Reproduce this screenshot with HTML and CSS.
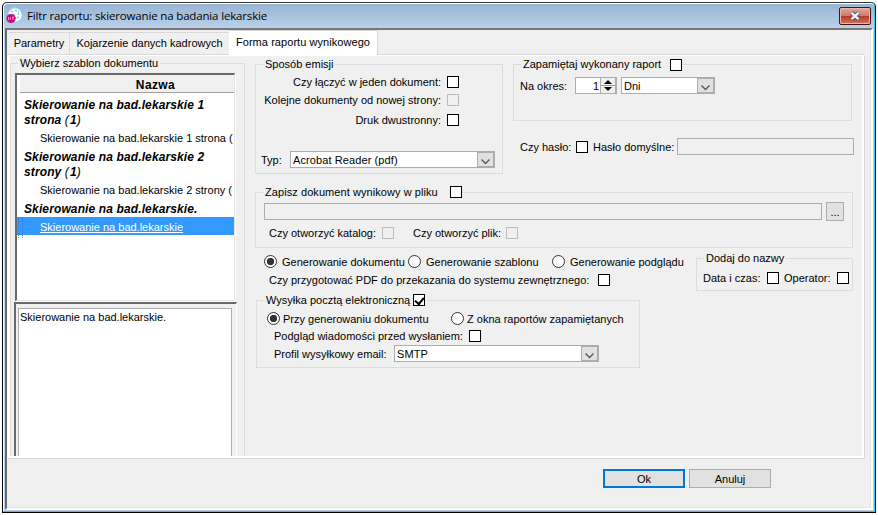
FILE: index.html
```html
<!DOCTYPE html>
<html lang="pl">
  <head>
    <meta charset="UTF-8">
    <meta name="viewport" content="width=device-width, initial-scale=1">
    <title>Filtr raportu</title>
    <link rel="stylesheet" href="styles.css">
  </head>
  <body>
    <div class="window">
      <div class="titlebar">
        <svg class="app-icon" width="17" height="17" viewBox="0 0 17 17">
          <circle cx="9" cy="8" r="7.2" fill="#f2fdff" stroke="#7fd6ea" stroke-width="1"/>
          <path d="M5 4l2 1M9 3l2 1M12 6l1 2M7 7l2 1M11 11l2-1M9 10l1 2M13 4l-1 1" stroke="#5cc4de" stroke-width="1"/>
          <circle cx="5" cy="11.5" r="4.6" fill="#d4087c"/>
          <path d="M2.5 10v3M4.3 10v3M6 10.2h2M7 10v3" stroke="#f5b5d9" stroke-width=".8"/>
        </svg>
        <span class="title">Filtr raportu: skierowanie na badania lekarskie</span>
        <button class="close">
          <svg width="12" height="10" viewBox="0 0 12 10">
            <path d="M2.5 1.8l7 6.4M9.5 1.8l-7 6.4" stroke="#4d5560" stroke-width="4.4"/>
            <path d="M2.5 1.8l7 6.4M9.5 1.8l-7 6.4" stroke="#f4f4f4" stroke-width="2.4"/>
          </svg>
        </button>
      </div>

      <div class="content">
        <div class="tabs">
          <div class="tab tab-first">Parametry</div>
          <div class="tab tab-second">Kojarzenie danych kadrowych</div>
          <div class="tab active">Forma raportu wynikowego</div>
          <div class="tab-rest"></div>
        </div>

        <div class="pane">
          <fieldset class="templates">
            <legend>Wybierz szablon dokumentu</legend>
            <div class="tree">
              <div class="tree-head">Nazwa</div>
              <div class="node">Skierowanie na bad.lekarskie 1<br>strona <i>(</i>1<i>)</i></div>
              <div class="leaf">Skierowanie na bad.lekarskie 1 strona (</div>
              <div class="node">Skierowanie na bad.lekarskie 2<br>strony <i>(</i>1<i>)</i></div>
              <div class="leaf">Skierowanie na bad.lekarskie 2 strony (</div>
              <div class="node single">Skierowanie na bad.lekarskie.</div>
              <div class="leaf selected"><span>Skierowanie na bad.lekarskie</span></div>
            </div>
            <div class="desc">
              <div class="desc-text">Skierowanie na bad.lekarskie.</div>
            </div>
          </fieldset>

          <div class="settings">
            <div class="top">
              <fieldset class="emission">
                <legend>Sposób emisji</legend>
                <label class="row right">Czy łączyć w jeden dokument:<input type="checkbox"></label>
                <label class="row right second">Kolejne dokumenty od nowej strony:<input type="checkbox" disabled></label>
                <label class="row right third">Druk dwustronny:<input type="checkbox"></label>
                <div class="row type">
                  <span class="type-label">Typ:</span>
                  <div class="select wide">Acrobat Reader (pdf)
                    <span class="arrow"><svg width="11" height="7" viewBox="0 0 11 7"><path d="M1.5 1.5l4 4 4-4" fill="none" stroke="#555" stroke-width="1.3"/></svg></span>
                  </div>
                </div>
              </fieldset>

              <div class="top-right">
                <fieldset class="remember">
                  <legend>Zapamiętaj wykonany raport<input type="checkbox"></legend>
                  <div class="row period">
                    <span class="period-label">Na okres:</span>
                    <div class="spinner">1
                      <span class="steps"><svg width="14" height="15" viewBox="0 0 14 15"><path d="M0 7.5h14" stroke="#999"/><path d="M3 6l4-4 4 4zM3 9l4 4 4-4z" fill="#000"/></svg></span>
                    </div>
                    <div class="select unit">Dni
                      <span class="arrow"><svg width="11" height="7" viewBox="0 0 11 7"><path d="M1.5 1.5l4 4 4-4" fill="none" stroke="#555" stroke-width="1.3"/></svg></span>
                    </div>
                  </div>
                </fieldset>
                <div class="row password">
                  <span class="pass-label">Czy hasło:</span><input type="checkbox">
                  <span class="default-label">Hasło domyślne:</span><div class="field pass"></div>
                </div>
              </div>
            </div>

            <fieldset class="file">
              <legend>Zapisz dokument wynikowy w pliku<input type="checkbox"></legend>
              <div class="row path">
                <div class="field"></div>
                <button class="browse">...</button>
              </div>
              <div class="row open">
                <span class="dir-label">Czy otworzyć katalog:</span><input type="checkbox" disabled>
                <span class="file-label">Czy otworzyć plik:</span><input type="checkbox" disabled>
              </div>
            </fieldset>

            <div class="middle">
              <div class="generate">
                <div class="row modes">
                  <label class="row"><input type="radio" name="mode" checked>Generowanie dokumentu</label>
                  <label class="row"><input type="radio" name="mode">Generowanie szablonu</label>
                  <label class="row"><input type="radio" name="mode">Generowanie podglądu</label>
                </div>
                <div class="row pdf">
                  <span class="pdf-label">Czy przygotować PDF do przekazania do systemu zewnętrznego:</span><input type="checkbox">
                </div>
              </div>
              <fieldset class="add-name">
                <legend>Dodaj do nazwy</legend>
                <div class="row">
                  <span class="date-label">Data i czas:</span><input type="checkbox">
                  <span class="operator-label">Operator:</span><input type="checkbox">
                </div>
              </fieldset>
            </div>

            <fieldset class="mail">
              <legend>Wysyłka pocztą elektroniczną<input type="checkbox" checked></legend>
              <div class="row send">
                <label class="row"><input type="radio" name="send" checked>Przy generowaniu dokumentu</label>
                <label class="row"><input type="radio" name="send">Z okna raportów zapamiętanych</label>
              </div>
              <div class="row preview">
                <span class="preview-label">Podgląd wiadomości przed wysłaniem:</span><input type="checkbox">
              </div>
              <div class="row profile">
                <span class="profile-label">Profil wysyłkowy email:</span>
                <div class="select wide">SMTP
                  <span class="arrow"><svg width="11" height="7" viewBox="0 0 11 7"><path d="M1.5 1.5l4 4 4-4" fill="none" stroke="#555" stroke-width="1.3"/></svg></span>
                </div>
              </div>
            </fieldset>
          </div>
        </div>

        <div class="buttons">
          <button class="btn default">Ok</button>
          <button class="btn">Anuluj</button>
        </div>
      </div>
    </div>
  </body>
</html>
```

FILE: styles.css
```css
* {
  box-sizing: border-box;
}
body {
  margin: 0;
  padding: 2px 0 0 2px;
  background: #fff;
  color: #000;
  font: 11px/12px "Liberation Sans", Arial, sans-serif;
  overflow: hidden;
}
button {
  padding: 0;
  font: inherit;
  color: inherit;
}

/* window frame */
.window {
  display: flex;
  flex-direction: column;
  width: 874px;
  height: 511px;
  border: 1px solid #000;
  border-top-color: #333;
  border-radius: 5px 5px 0 0;
  background: #b9d1ea;
  box-shadow: inset -1px -1px #34c6eb, inset 1px 1px #fff;
}
.titlebar {
  display: flex;
  align-items: center;
  height: 24px;
  margin: 1px 1px 0;
  padding: 0 3px 0 2px;
  border-radius: 4px 4px 0 0;
  background: linear-gradient(#98b4d2, #b9d1ea);
}
.app-icon {
  margin: 0 4px 1px 0;
}
.title {
  flex: 1;
  font: 11.5px/16px "Open Sans", "Noto Sans", sans-serif;
  letter-spacing: -0.16px;
  white-space: nowrap;
}
.close {
  display: flex;
  align-items: center;
  justify-content: center;
  width: 32px;
  height: 18px;
  border: 1px solid #4b1414;
  border-radius: 2px;
  background: linear-gradient(#e3a79b, #d07a6b 48%, #b63a22 50%, #cf7560);
  box-shadow: inset 0 0 0 1px #e9b8ad;
}
.content {
  flex: 1;
  display: flex;
  flex-direction: column;
  margin: 0 2px 2px 2px;
  border: solid;
  border-width: 2px 2px 2px 2px;
  border-color: #777 #fff #fff #696969;
  background: #f0f0f0;
  box-shadow: inset -1px -1px #e3e3e3;
}

/* tabs */
.tabs {
  display: flex;
  align-items: flex-end;
  height: 25px;
  padding: 0 7px 0 2px;
}
.tab {
  height: 23px;
  border: solid #d9d9d9;
  border-width: 1px 1px 1px 0;
  line-height: 21px;
  text-align: center;
}
.tab-first {
  width: 61px;
}
.tab-second {
  width: 159px;
  border-right: 0;
}
.tab.active {
  width: 149px;
  height: 25px;
  border-bottom: 0;
  background: #fff;
  line-height: 22px;
  letter-spacing: 0.06px;
}
.tab-rest {
  flex: 1;
  border-bottom: 1px solid #d9d9d9;
}
.pane {
  display: flex;
  width: 857px;
  height: 403px;
  border: solid #fff;
  border-width: 1px 2px 2px 3px;
  box-shadow: 1px 1px #d9d9d9;
}

/* group boxes */
fieldset {
  min-width: 0;
  margin: 0;
  padding: 0;
  border: 1px solid #dcdcdc;
}
legend {
  display: flex;
  align-items: center;
  height: 13px;
  margin-left: 7px;
  padding: 0 2px;
  line-height: 13px;
  white-space: nowrap;
}
.row {
  display: flex;
  align-items: center;
  white-space: nowrap;
}

/* controls */
input {
  flex: none;
  appearance: none;
  margin: 0;
}
input[type="checkbox"] {
  width: 12px;
  height: 12px;
  border: 1px solid #000;
  background: #fff;
}
input[type="checkbox"]:disabled {
  border-color: #bcbcbc;
  background: #f0f0f0;
}
input[type="checkbox"]:checked {
  display: flex;
}
input[type="checkbox"]:checked::before {
  content: "";
  width: 8px;
  height: 4px;
  margin: 2px 0 0 1px;
  border: solid #000;
  border-width: 0 0 2px 2px;
  transform: rotate(-50deg);
}
input[type="radio"] {
  width: 13px;
  height: 13px;
  border: 1px solid #333;
  border-radius: 50%;
  background: #fff;
}
input[type="radio"]:checked {
  background: radial-gradient(circle, #333 3.4px, #fff 4px);
}
.select {
  display: flex;
  align-items: center;
  justify-content: space-between;
  height: 17px;
  padding-left: 2px;
  border: 1px solid #adadb0;
  background: #fff;
}
.select.wide {
  width: 205px;
  letter-spacing: 0.1px;
}
.arrow {
  display: flex;
  align-items: center;
  justify-content: center;
  width: 17px;
  height: 15px;
  padding-top: 4px;
  border: 1px solid #adadad;
  background: #e1e1e1;
}
.spinner {
  display: flex;
  align-items: center;
  justify-content: flex-end;
  width: 42px;
  height: 17px;
  border: 1px solid #adadb0;
  background: #fff;
}
.steps {
  display: flex;
  width: 16px;
  margin-left: 1px;
  border: solid #adadad;
  border-width: 0 1px;
  background: #f0f0f0;
}
.field {
  height: 17px;
  border: 1px solid #adadb0;
}

/* template tree */
.templates {
  display: flex;
  flex-direction: column;
  width: 235px;
  height: 399px;
  margin-top: 1px;
  border-bottom: 0;
}
.tree {
  position: relative;
  width: 220px;
  height: 228px;
  margin: 3px 0 0 4px;
  border: solid;
  border-width: 2px 1px 1px 2px;
  border-color: #696969 #e3e3e3 #e3e3e3 #696969;
  background: #fff;
  box-shadow: 1px 1px #fff;
  overflow: hidden;
}
.tree-head {
  height: 18px;
  margin: 0 0 4px 3px;
  padding-left: 57px;
  border-bottom: 1px solid #a0a0a0;
  background: #f0f0f0;
  font-weight: bold;
  font-size: 12px;
  line-height: 21px;
  letter-spacing: 0.4px;
  text-align: center;
}
.node {
  padding: 1px 0 0 7px;
  font: italic bold 12px/15px "Liberation Sans", Arial, sans-serif;
  letter-spacing: 0.12px;
  white-space: nowrap;
}
.node i {
  margin-right: 1px;
  font-weight: normal;
}
.leaf {
  height: 21px;
  padding-left: 23px;
  line-height: 21px;
  white-space: nowrap;
}
.node.single {
  height: 16px;
}
.leaf.selected {
  height: 18px;
  background: #3399ff;
  color: #fff;
  line-height: 20px;
}
.leaf.selected span {
  text-decoration: underline;
}
.leaf.selected::before {
  content: "";
  position: absolute;
  left: 1px;
  width: 3px;
  height: 21px;
  border: dotted #8a6d58;
  border-width: 0 1px;
}
.desc {
  flex: 1;
  width: 223px;
  margin: 1px 0 0 3px;
  padding: 4px 4px 0 2px;
  border: solid;
  border-width: 2px 1px 0 2px;
  border-color: #696969 #fff #fff #696969;
}
.desc-text {
  height: 100%;
  padding: 2px 0 0 1px;
  border: 1px solid #adadb0;
  border-bottom: 0;
  background: #fff;
}

/* right side */
.settings {
  flex: 1;
  padding: 2px 0 0 10px;
}
.top {
  display: flex;
  gap: 10px;
}
.emission {
  width: 248px;
  height: 116px;
}
.row.right {
  justify-content: flex-end;
  gap: 6px;
  height: 12px;
  margin: 5px 43px 0 0;
}
.row.second {
  margin-top: 6px;
}
.row.third {
  margin-top: 8px;
}
.type {
  margin: 25px 0 0 5px;
}
.type-label {
  width: 29px;
}
.remember {
  width: 339px;
  height: 63px;
}
.remember legend {
  padding-right: 0;
}
.remember legend input {
  margin-left: 9px;
}
.period {
  margin: 6px 0 0 6px;
}
.period-label {
  width: 55px;
}
.select.unit {
  width: 94px;
  margin-left: 4px;
}
.password {
  margin: 17px 0 0 7px;
}
.pass-label {
  width: 56px;
}
.default-label {
  width: 84px;
  margin-left: 5px;
}
.field.pass {
  width: 177px;
}
.file {
  width: 598px;
  height: 62px;
  margin-top: 12px;
}
.file legend {
  padding-right: 0;
  letter-spacing: 0.07px;
}
.file legend input {
  margin: -2px 0 0 12px;
}
.path {
  margin: 3px 0 0 8px;
}
.path .field {
  width: 558px;
}
.browse {
  width: 18px;
  height: 19px;
  margin-left: 4px;
  border: 1px solid #adadad;
  background: #e1e1e1;
}
.open {
  margin: 6px 0 0 13px;
}
.dir-label {
  width: 113px;
}
.file-label {
  width: 93px;
  margin-left: 19px;
}
.middle {
  display: flex;
  margin-top: 4px;
}
.generate {
  width: 441px;
  padding: 3px 0 0 9px;
}
.modes .row {
  gap: 5px;
  width: 144px;
}
.pdf {
  margin: 6px 0 0 5px;
}
.pdf-label {
  width: 329px;
}
.add-name {
  width: 157px;
  height: 39px;
}
.add-name .row {
  margin: 7px 0 0 6px;
}
.date-label {
  width: 64px;
}
.operator-label {
  width: 53px;
  margin-left: 5px;
}
.mail {
  width: 384px;
  height: 74px;
  margin: 3px 0 0 1px;
}
.mail legend input {
  margin: -1px 0 0 3px;
}
.send {
  margin: 5px 0 0 10px;
}
.send .row {
  gap: 3px;
  width: 184px;
}
.preview {
  margin: 5px 0 0 17px;
}
.preview-label {
  width: 195px;
}
.profile {
  margin: 3px 0 0 17px;
}
.profile-label {
  width: 120px;
}

.buttons {
  display: flex;
  gap: 4px;
  padding: 11px 0 0 596px;
}
.btn {
  width: 82px;
  height: 19px;
  border: 1px solid #adadad;
  background: #e1e1e1;
}
.btn.default {
  border: 2px solid #0078d7;
}
```
